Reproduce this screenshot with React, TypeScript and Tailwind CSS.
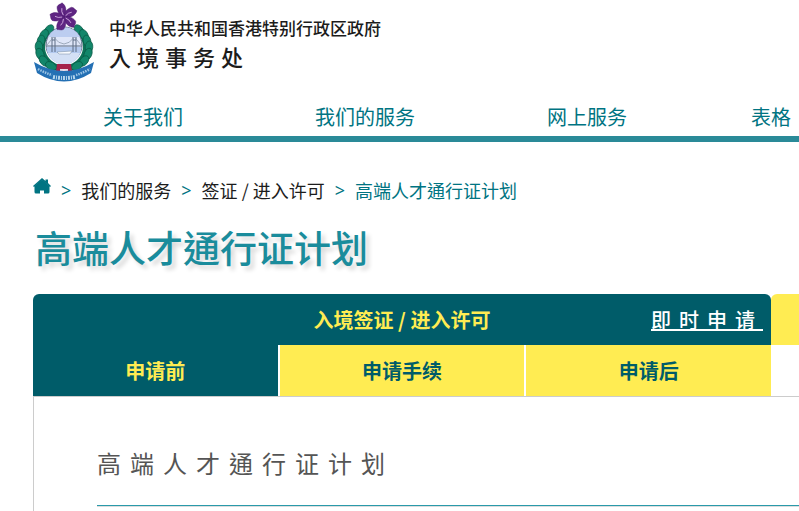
const navItems = ['关于我们', '我们的服务', '网上服务'];

function Wreath() {
  const leaves = [
    [15, 26, -50], [10, 31, -60], [7, 37, -78], [5, 43, -95], [6, 50, -112], [10, 57, -130], [17, 62, -150],
  ];
  return (
    <g fill="#12866a" stroke="#075843" strokeWidth="0.7">
      {leaves.map(([x, y, r]) => (
        <g key={y}>
          <ellipse cx={x} cy={y} rx="6" ry="3.8" transform={`rotate(${r} ${x} ${y})`} />
          <ellipse cx={60 - x} cy={y} rx="6" ry="3.8" transform={`rotate(${-r} ${60 - x} ${y})`} />
        </g>
      ))}
    </g>
  );
}

function Emblem() {
  const petals = [-20, 52, 124, 196, 268];
  return (
    <svg viewBox="0 0 60 78" className="h-[78px] w-[60px] shrink-0 overflow-visible" role="img" aria-label="入境事务处徽号">
      <path d="M15 24 C-1 36 2 62 26 68 L34 68 C58 62 61 36 45 24 L43 28 C56 44 46 60 30 62 C14 60 4 44 17 28Z" fill="#0d7358" />
      <Wreath />
      <circle cx="30" cy="41" r="18" fill="#dfe6f8" stroke="#4a5f78" strokeWidth="1" />
      <path d="M14 33 A18 18 0 0 1 46 33Z" fill="#bccdf0" />
      <path d="M12.5 43 H47.5 A17.5 17.5 0 0 1 12.5 43Z" fill="#b3c9ee" />
      <path d="M14 49 H46 A17 17 0 0 1 14 49Z" fill="#d3e0f5" />
      <path d="M12.5 42 H47.5 M18 33 V48 M21 33 V48 M39 33 V48 M42 33 V48 M18 36 H21 M39 36 H42" stroke="#5c6d84" strokeWidth="1" fill="none" />
      <path d="M13 41 L19.5 33 Q30 47 40.5 33 L47 41" stroke="#8291a4" strokeWidth="0.7" fill="none" />
      <path d="M23 48 L38 47 L36 50 H25Z" fill="#f8fbff" stroke="#71869c" strokeWidth="0.5" />
      <g fill="#5f2583" stroke="#451468" strokeWidth="0.4">
        {petals.map((r) => (
          <path key={r} d="M30 13 C27 11 25 6 27 1 C29 -1 31 0 33 -1 C36 3 35 9 30 13Z" transform={`rotate(${r} 30 13)`} />
        ))}
      </g>
      <g stroke="#d9b5e6" strokeWidth="0.8" fill="none">
        {petals.map((r) => (
          <path key={r} d="M30 11 Q29 7 31 4" transform={`rotate(${r} 30 13)`} />
        ))}
      </g>
      <path d="M23 60 H37 L38 68 H34 V65 H26 V68 H22Z" fill="#a5234a" />
      <path d="M26 65 H34 V70 H26Z" fill="#e9dbe6" />
      <path d="M0 58 Q30 76 60 58 L57 69 Q30 86 3 69Z" fill="#2470b4" />
      <path d="M4 65 Q11 69 18 71 M42 71 Q49 69 56 65" stroke="#9cc4e4" strokeWidth="2.5" strokeDasharray="1.5 1" fill="none" />
      <path d="M19 73 Q30 75 41 73" stroke="#b5d5ec" strokeWidth="4" strokeDasharray="2 1 1 1" fill="none" />
    </svg>
  );
}

function HomeIcon() {
  return (
    <svg viewBox="0 0 18 16" className="h-4 w-[18px]" fill="#007482" aria-hidden="true">
      <path d="M9 0 L12.5 3 V1.5 H15 V5 L18 8 L17 9 L9 2 L1 9 L0 8Z" />
      <path d="M9 1.5 L16.5 8 V14 Q16.5 15.5 15 15.5 H11 V12.5 H7 V15.5 H3 Q1.5 15.5 1.5 14 V8Z" />
    </svg>
  );
}

function Separator() {
  return <span aria-hidden="true" className="px-[10px] font-['Noto_Sans'] text-lg leading-6 text-[#007482]">&gt;</span>;
}

export default function App() {
  return (
    <div className="flex min-h-screen flex-col overflow-hidden bg-white font-['Noto_Sans_CJK_TC','Noto_Sans_CJK_SC',sans-serif]">
      <header className="border-b-6 border-[#2a8a98]">
        <div className="flex gap-[15px] pt-1 pl-[34px]">
          <Emblem />
          <div className="pt-3 font-medium text-[#1c1c1c]">
            <p className="text-[17px] leading-6">中华人民共和国香港特别行政区政府</p>
            <p className="text-[22px] leading-8 tracking-[6px]">入境事务处</p>
          </div>
        </div>
        <nav className="flex pt-[18px] pb-0.5 pl-8 text-xl leading-[34px] text-[#007482]">
          {navItems.map((item) => (
            <a key={item} href="#" className="w-[222px] shrink-0 text-center">{item}</a>
          ))}
          <a href="#" className="w-[146px] shrink-0 text-center">表格</a>
        </nav>
      </header>

      <main className="flex flex-1 flex-col pl-[33px]">
        <nav aria-label="路径" className="flex items-center pt-9 text-lg leading-6 text-[#1c1c1c]">
          <a href="#" aria-label="主页" className="pb-2"><HomeIcon /></a>
          <Separator />
          <a href="#">我们的服务</a>
          <Separator />
          <a href="#" className="font-['Noto_Sans_CJK_SC',sans-serif]">签证 / 进入许可</a>
          <Separator />
          <span className="text-[#007482]">高端人才通行证计划</span>
        </nav>

        <h1 className="mt-[18px] pb-0.5 pl-0.5 text-[37px] leading-[54px] font-medium text-[#1a8c9c] [text-shadow:4px_4px_4px_rgba(0,0,0,0.15)]">
          高端人才通行证计划
        </h1>

        <div className="mt-[18px] flex items-start font-['Noto_Sans_CJK_SC',sans-serif]">
          <section className="w-[738px] shrink-0">
            <div className="grid h-[51px] grid-cols-[1fr_auto_1fr] items-center rounded-t-md bg-[#005c69] px-2 text-xl">
              <button className="col-start-2 font-bold text-[#ffec52]">入境签证 / 进入许可</button>
              <a href="#" className="justify-self-end font-['Noto_Sans_CJK_TC',sans-serif] font-medium tracking-[8px] text-white underline decoration-2">即时申请</a>
            </div>
            <div className="grid h-[51px] grid-cols-3 gap-0.5 text-xl font-bold text-[#005c69]">
              <button className="bg-[#005c69] text-[#ffec52]">申请前</button>
              <button className="bg-[#ffec52]">申请手续</button>
              <button className="bg-[#ffec52]">申请后</button>
            </div>
          </section>
          <div className="h-[51px] flex-1 rounded-tl-md bg-[#ffec52]" />
        </div>

        <section className="flex-1 border-t border-l border-[#cccccc] pt-[46px] pl-[63px]">
          <h2 className="text-2xl leading-10 tracking-[9px] text-[#555555]">高端人才通行证计划</h2>
          <hr className="mt-[22px] h-0.5 border-t border-b border-t-[#2a9aaa] border-b-[#dddddd]" />
        </section>
      </main>
    </div>
  );
}
